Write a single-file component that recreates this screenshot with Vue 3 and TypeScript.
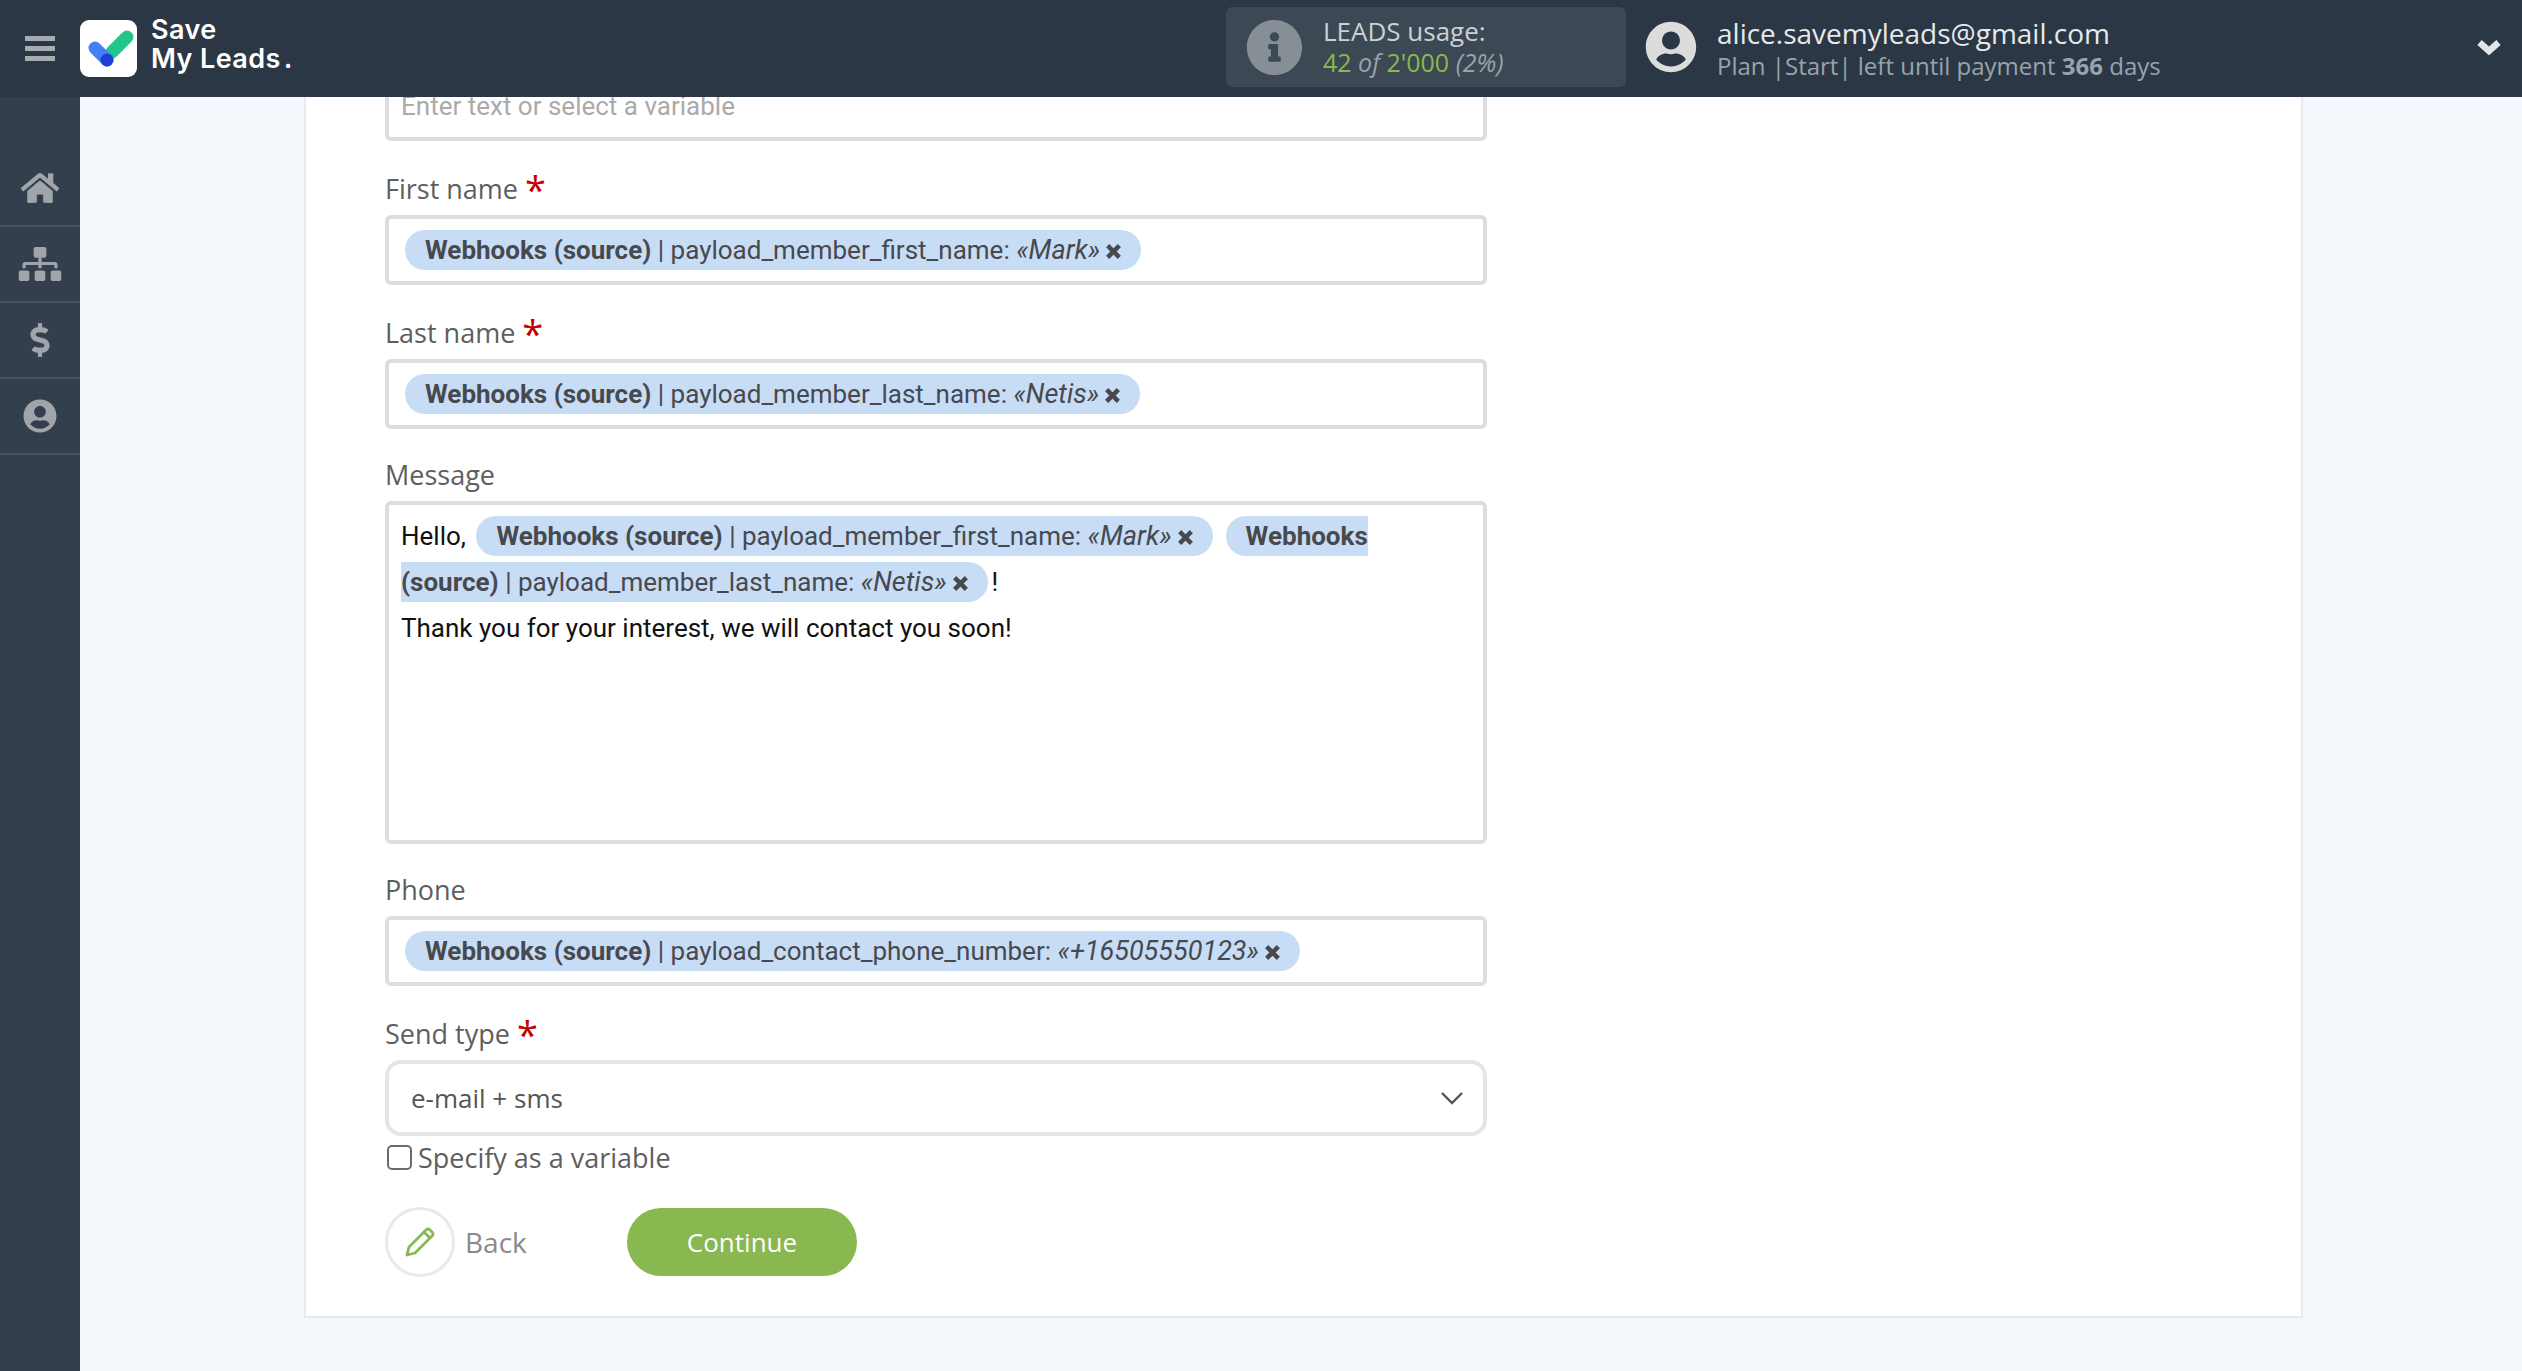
<script setup lang="ts">
// Форма отправки: поля с переменными из источника
interface Chip {
  field: string;
  value: string;
}
interface Field {
  label: string;
  required: boolean;
  chip: Chip;
}

const SOURCE = 'Webhooks (source)';

const nameFields: Field[] = [
  { label: 'First name', required: true, chip: { field: 'payload_member_first_name', value: 'Mark' } },
  { label: 'Last name', required: true, chip: { field: 'payload_member_last_name', value: 'Netis' } },
];
const phoneChip: Chip = { field: 'payload_contact_phone_number', value: '+16505550123' };

const navIcons = [
  {
    key: 'home',
    box: '0 0 576 512',
    w: 40,
    d: 'M280.37 148.26L96 300.11V464a16 16 0 0 0 16 16l112.06-.29a16 16 0 0 0 15.92-16V368a16 16 0 0 1 16-16h64a16 16 0 0 1 16 16v95.64a16 16 0 0 0 16 16.05L464 480a16 16 0 0 0 16-16V300L295.67 148.26a12.19 12.19 0 0 0-15.3 0zM571.6 251.47L488 182.56V44.05a12 12 0 0 0-12-12h-56a12 12 0 0 0-12 12v72.61L318.47 43a48 48 0 0 0-61 0L4.34 251.47a12 12 0 0 0-1.6 16.9l25.5 31A12 12 0 0 0 45.15 301l235.22-193.74a12.19 12.19 0 0 1 15.3 0L530.9 301a12 12 0 0 0 16.9-1.6l25.5-31a12 12 0 0 0-1.7-16.93z',
  },
  {
    key: 'sitemap',
    box: '0 0 640 512',
    w: 44,
    d: 'M128 352H32c-17.67 0-32 14.33-32 32v96c0 17.67 14.33 32 32 32h96c17.67 0 32-14.33 32-32v-96c0-17.67-14.33-32-32-32zm-24-80h192v48h48v-48h192v48h48v-57.59c0-21.17-17.23-38.41-38.41-38.41H344v-64h40c17.67 0 32-14.33 32-32V32c0-17.67-14.33-32-32-32H256c-17.67 0-32 14.33-32 32v96c0 17.67 14.33 32 32 32h40v64H94.41C73.23 224 56 241.23 56 262.41V320h48v-48zm264 80h-96c-17.67 0-32 14.33-32 32v96c0 17.67 14.33 32 32 32h96c17.67 0 32-14.33 32-32v-96c0-17.67-14.33-32-32-32zm240 0h-96c-17.67 0-32 14.33-32 32v96c0 17.67 14.33 32 32 32h96c17.67 0 32-14.33 32-32v-96c0-17.67-14.33-32-32-32z',
  },
  {
    key: 'dollar',
    box: '0 0 288 512',
    w: 20,
    d: 'M209.2 233.4l-108-31.6C88.7 198.2 80 186.5 80 173.5c0-16.3 13.2-29.5 29.5-29.5h66.3c12.2 0 24.2 3.7 34.2 10.5 6.1 4.1 14.3 3.1 19.5-2l34.8-34c7.1-6.9 6.1-18.4-1.8-24.5C238 74.8 207.4 64.1 176 64V16c0-8.8-7.2-16-16-16h-32c-8.8 0-16 7.2-16 16v48h-2.5C45.8 64-5.4 118.7.5 183.6c4.2 46.1 39.4 83.6 83.8 96.6l102.5 30c12.5 3.7 21.2 15.3 21.2 28.3 0 16.3-13.2 29.5-29.5 29.5h-66.3C100 368 88 364.3 78 357.5c-6.1-4.1-14.3-3.1-19.5 2l-34.8 34c-7.1 6.9-6.1 18.4 1.8 24.5 24.5 19.2 55.1 29.9 86.5 30v48c0 8.8 7.2 16 16 16h32c8.8 0 16-7.2 16-16v-48.2c46.6-.9 90.3-28.6 105.7-72.7 21.5-61.6-14.6-124.8-72.5-141.7z',
  },
  {
    key: 'user',
    box: '0 0 496 512',
    w: 34,
    d: 'M248 8C111 8 0 119 0 256s111 248 248 248 248-111 248-248S385 8 248 8zm0 96c48.6 0 88 39.4 88 88s-39.4 88-88 88-88-39.4-88-88 39.4-88 88-88zm0 344c-58.7 0-111.3-26.6-146.5-68.2 18.8-35.4 55.6-59.8 98.5-59.8 2.4 0 4.8.4 7.1 1.1 13 4.2 26.6 6.9 40.9 6.9 14.3 0 28-2.7 40.9-6.9 2.3-.7 4.7-1.1 7.1-1.1 42.9 0 79.7 24.4 98.5 59.8C359.3 421.4 306.7 448 248 448z',
  },
];

const userPath = navIcons[3].d;
const closePath = 'M2.5 2.5 L13.5 13.5 M13.5 2.5 L2.5 13.5';
</script>

<template>
  <div class="page">
    <header class="topbar">
      <div class="brand">
        <div class="burger"><i></i><i></i><i></i></div>
        <div class="logo">
          <svg width="57" height="57" viewBox="0 0 57 57">
            <path d="M33 38 L48 23" stroke="#22c68a" stroke-width="13" stroke-linecap="round" fill="none" transform="translate(-1 -6)" />
            <path d="M15 28 L27 40" stroke="#4480f8" stroke-width="13" stroke-linecap="round" fill="none" />
            <circle cx="27" cy="40" r="6.5" fill="#1d3fd8" />
          </svg>
        </div>
        <div class="logo-text">Save<br />My Leads<span class="dot">.</span></div>
      </div>

      <div class="usage">
        <svg class="info" viewBox="0 0 512 512" fill="#868e96">
          <path d="M256 8C119.043 8 8 119.083 8 256c0 136.997 111.043 248 248 248s248-111.003 248-248C504 119.083 392.957 8 256 8zm0 110c23.196 0 42 18.804 42 42s-18.804 42-42 42-42-18.804-42-42 18.804-42 42-42zm56 254c0 6.627-5.373 12-12 12h-88c-6.627 0-12-5.373-12-12v-24c0-6.627 5.373-12 12-12h12v-64h-12c-6.627 0-12-5.373-12-12v-24c0-6.627 5.373-12 12-12h64c6.627 0 12 5.373 12 12v100h12c6.627 0 12 5.373 12 12v24z" />
        </svg>
        <div class="usage-text">
          <div class="usage-title">LEADS usage:</div>
          <div class="usage-count"><b>42</b> <em>of</em> <b>2'000</b> <em>(2%)</em></div>
        </div>
      </div>

      <div class="account">
        <svg class="avatar" viewBox="0 0 496 512" fill="#dcdcdc"><path :d="userPath" /></svg>
        <div class="account-text">
          <div class="email">alice.savemyleads@gmail.com</div>
          <div class="plan">Plan |Start| left until payment <b>366</b> days</div>
        </div>
        <svg class="caret" width="26" height="16" viewBox="0 0 26 16">
          <path d="M3.5 3.5 L13 12 L22.5 3.5" stroke="#e3e6e8" stroke-width="6.5" fill="none" />
        </svg>
      </div>
    </header>

    <div class="body">
      <nav class="sidebar">
        <a v-for="n in navIcons" :key="n.key" class="nav-item">
          <svg :viewBox="n.box" :width="n.w" height="34" fill="#a0a5ab"><path :d="n.d" /></svg>
        </a>
      </nav>

      <main class="main">
        <section class="card">
          <div class="field placeholder">Enter text or select a variable</div>

          <template v-for="f in nameFields" :key="f.label">
            <div class="label">{{ f.label }} <span class="req">*</span></div>
            <div class="field">
              <span class="chip"><b>{{ SOURCE }}</b> | {{ f.chip.field }}: <em>«{{ f.chip.value }}»</em>
                <svg class="close" viewBox="0 0 16 16"><path :d="closePath" /></svg></span>
            </div>
          </template>

          <div class="label plain">Message</div>
          <div class="field message">
            Hello,
            <span class="chip"><b>{{ SOURCE }}</b> | payload_member_first_name: <em>«Mark»</em>
              <svg class="close" viewBox="0 0 16 16"><path :d="closePath" /></svg></span>
            <span class="chip"><b>Webhooks<br />(source)</b> | payload_member_last_name: <em>«Netis»</em>
              <svg class="close" viewBox="0 0 16 16"><path :d="closePath" /></svg></span>!
            <br />
            Thank you for your interest, we will contact you soon!
          </div>

          <div class="label plain">Phone</div>
          <div class="field">
            <span class="chip"><b>{{ SOURCE }}</b> | {{ phoneChip.field }}: <em>«{{ phoneChip.value }}»</em>
              <svg class="close" viewBox="0 0 16 16"><path :d="closePath" /></svg></span>
          </div>

          <div class="label">Send type <span class="req">*</span></div>
          <div class="select">
            <span>e-mail + sms</span>
            <svg width="24" height="14" viewBox="0 0 24 14">
              <path d="M2 2 L12 12 L22 2" stroke="#555" stroke-width="2.4" fill="none" />
            </svg>
          </div>

          <label class="check">
            <input type="checkbox" />
            <span>Specify as a variable</span>
          </label>

          <div class="actions">
            <button class="back">
              <span class="back-circle">
                <svg width="30" height="30" viewBox="0 0 30 30" fill="none" stroke="#88b84f" stroke-width="2.8" stroke-linejoin="round">
                  <path d="M2 28 L4 20 L19 5 L25 11 L10 26 Z" />
                  <path d="M19 5 L21.5 2.5 Q23 1.5 24.5 2.5 L27.5 5.5 Q28.5 7 27.5 8.5 L25 11" />
                </svg>
              </span>
              <span>Back</span>
            </button>
            <button class="continue">Continue</button>
          </div>
        </section>
      </main>
    </div>
  </div>
</template>

<style>
html,
body {
  margin: 0;
  overflow: hidden;
}
</style>

<style scoped>
.page {
  width: 2522px;
  height: 1371px;
  display: flex;
  flex-direction: column;
  overflow: hidden;
  font-family: "Open Sans", sans-serif;
  background: #f4f7fc;
}

/* шапка */
.topbar {
  height: 97px;
  flex: none;
  display: flex;
  align-items: center;
  background: #2b3744;
  position: relative;
  z-index: 2;
}
.brand {
  width: 1226px;
  flex: none;
  display: flex;
  align-items: center;
}
.burger {
  width: 80px;
  display: flex;
  flex-direction: column;
  align-items: center;
  gap: 5px;
}
.burger i {
  display: block;
  width: 30px;
  height: 5px;
  background: #a5abb1;
}
.logo {
  width: 57px;
  height: 57px;
  border-radius: 9px;
  background: #fff;
}
.logo svg {
  display: block;
}
.logo-text {
  margin: 0 0 10px 14px;
  font-family: Inter, sans-serif;
  font-weight: 600;
  font-size: 27px;
  line-height: 29px;
  letter-spacing: 0.4px;
  color: #fff;
}
.logo-text .dot {
  margin-left: 3px;
}
.usage {
  width: 400px;
  height: 80px;
  flex: none;
  box-sizing: border-box;
  margin-bottom: 3px;
  padding-left: 20px;
  display: flex;
  align-items: center;
  gap: 20px;
  background: #3c4853;
  border-radius: 6px;
}
.info {
  width: 57px;
  height: 57px;
}
.usage-title {
  font-size: 26px;
  line-height: 31px;
  color: #c9d1d6;
}
.usage-count {
  font-size: 25px;
  line-height: 31px;
  color: #9aa3ab;
}
.usage-count b {
  font-weight: 400;
  color: #8ab84f;
}
.account {
  flex: 1;
  display: flex;
  align-items: center;
  margin-bottom: 3px;
  padding-left: 19px;
  padding-right: 20px;
}
.avatar {
  width: 52px;
  height: 52px;
  flex: none;
}
.account-text {
  margin-left: 20px;
  flex: 1;
}
.email {
  font-size: 28px;
  line-height: 37px;
  color: #e6e9eb;
}
.plan {
  font-size: 24px;
  line-height: 28px;
  color: #9aa3ab;
}
.plan b {
  font-weight: 700;
}

/* боковое меню */
.body {
  flex: 1;
  display: flex;
  min-height: 0;
}
.sidebar {
  width: 80px;
  flex: none;
  box-sizing: border-box;
  padding-top: 54px;
  background: #343f4d;
}
.nav-item {
  height: 76px;
  box-sizing: border-box;
  display: flex;
  align-items: center;
  justify-content: center;
  border-bottom: 2px solid #465260;
}

/* карточка формы */
.main {
  flex: 1;
  min-width: 0;
  overflow: hidden;
  padding: 0 219px 0 224px;
}
.card {
  height: 1247px;
  margin-top: -26px;
  box-sizing: border-box;
  padding: 0 814px 0 79px;
  background: #fff;
  border: solid #e8ebee;
  border-width: 0 2px 2px;
}
.label {
  box-sizing: border-box;
  height: 74px;
  padding-top: 30px;
  line-height: 36px;
  font-size: 27px;
  color: #5e5e5e;
}
.label.plain {
  height: 72px;
  padding-top: 28px;
}
.req {
  color: #c40000;
  font-size: 38px;
  line-height: 20px;
  vertical-align: -5px;
}
.field {
  box-sizing: border-box;
  padding: 8px 12px;
  border: 4px solid #ddd;
  border-radius: 6px;
  font-family: Roboto, sans-serif;
  font-size: 26px;
  line-height: 46px;
  color: #111;
  background: #fff;
}
.field.placeholder {
  height: 70px;
  color: #aaa;
}
.field.message {
  height: 343px;
}
.chip {
  margin: 0 4px;
  padding: 5px 19px 5px 20px;
  border-radius: 20px;
  background: #c7dcf5;
  color: #47494e;
  white-space: nowrap;
}
.chip + .chip {
  margin-left: 9px;
}
.chip b {
  font-weight: 700;
}
.chip em {
  font-size: 27px;
}
.close {
  width: 17px;
  height: 17px;
  margin-left: 5px;
  vertical-align: -1px;
  stroke: #47494e;
  stroke-width: 4.2;
  fill: none;
}
.select {
  height: 76px;
  box-sizing: border-box;
  display: flex;
  align-items: center;
  justify-content: space-between;
  padding: 0 19px 0 22px;
  border: 4px solid #e5e5e5;
  border-radius: 16px;
  font-size: 26px;
  color: #555;
}
.check {
  display: flex;
  align-items: center;
  gap: 6px;
  height: 34px;
  margin: 4px 0 0 2px;
  font-size: 27px;
  font-weight: 500;
  color: #5e5e5e;
}
.check input {
  appearance: none;
  width: 25px;
  height: 25px;
  margin: 0;
  box-sizing: border-box;
  border: 2px solid #6b6b6b;
  border-radius: 5px;
  background: #fff;
}
.actions {
  display: flex;
  align-items: center;
  gap: 0;
  margin-top: 33px;
}
.back,
.continue {
  font-family: inherit;
  font-size: 26px;
  border: 0;
  padding: 0;
  background: none;
}
.back {
  width: 242px;
  display: flex;
  align-items: center;
  gap: 10px;
  font-size: 28px;
  color: #8a8a8a;
}
.back-circle {
  width: 70px;
  height: 70px;
  box-sizing: border-box;
  display: flex;
  align-items: center;
  justify-content: center;
  border: 3px solid #e3ecec;
  border-radius: 50%;
}
.continue {
  width: 230px;
  height: 68px;
  border-radius: 34px;
  background: #88b84f;
  color: #fff;
}
</style>
